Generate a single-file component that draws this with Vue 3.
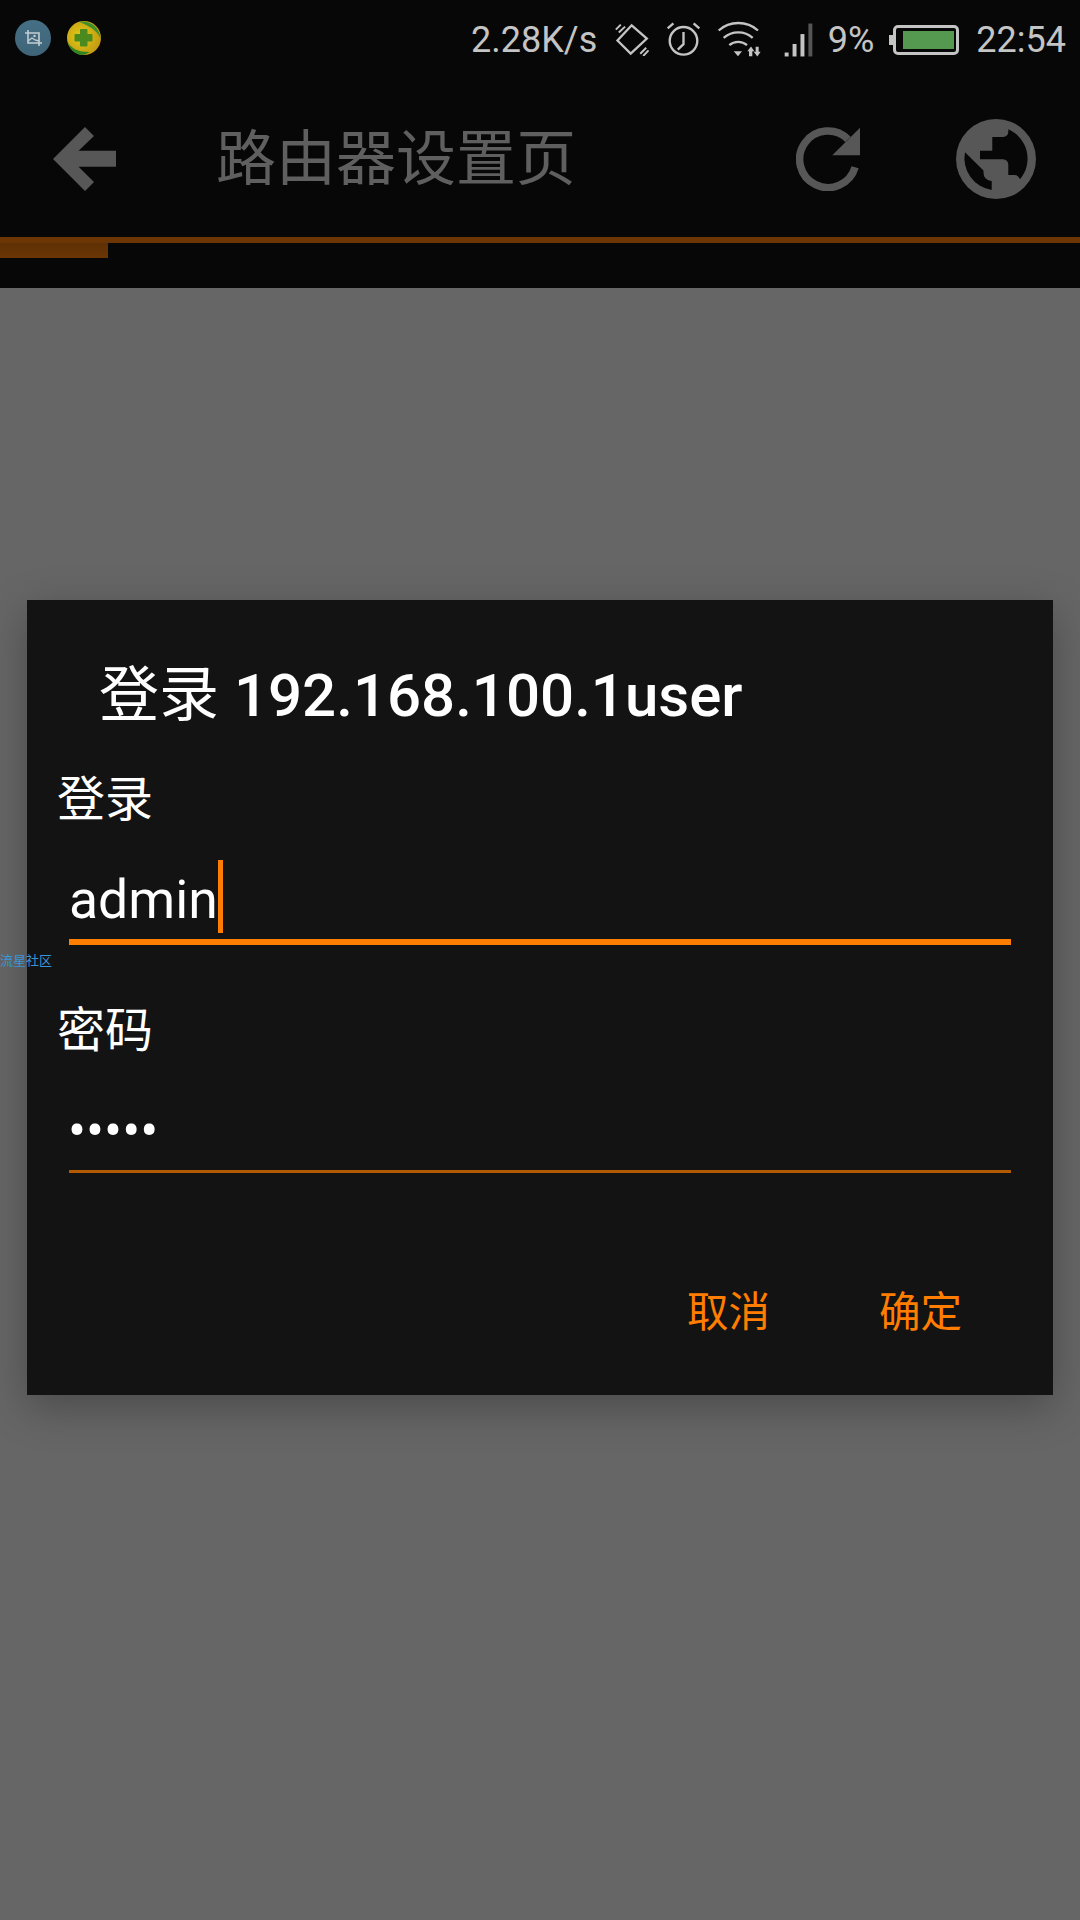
<script setup>
const password = '•••••'
</script>

<template>
  <div class="screen">
    <div class="top">
      <div class="status">
        <div class="notif">
          <svg class="app" width="36" height="36" viewBox="0 0 36 36" fill="none">
            <defs>
              <linearGradient id="blue-dot" x1="0" y1="0" x2="0" y2="1">
                <stop offset="0" stop-color="#456f85" />
                <stop offset="1" stop-color="#3f6478" />
              </linearGradient>
            </defs>
            <circle cx="18" cy="18" r="18" fill="url(#blue-dot)" />
            <path d="M13 10v13h14M10 13h14v13" stroke="#c4ced2" stroke-width="1.6" />
            <path d="M13 21l4-3 3 2 4 1" stroke="#c4ced2" stroke-width="1.3" />
            <circle cx="19.5" cy="16" r="1.2" fill="#c4ced2" />
          </svg>
          <svg class="app" width="34" height="34" viewBox="0 0 34 34">
            <defs>
              <radialGradient id="yellow-ball" cx="0.4" cy="0.45" r="0.6">
                <stop offset="0" stop-color="#e0cc18" />
                <stop offset="1" stop-color="#c49a12" />
              </radialGradient>
            </defs>
            <circle cx="17" cy="17" r="17" fill="url(#yellow-ball)" />
            <path d="M12 .8C20-1 32 3 33.8 18 30 9 22 5 12 .8z" fill="#3c8f2a" />
            <path d="M.6 21c4 7 11 10 22 10-4 3-8 3.400-11 2.400C6 31.500 2 27 .6 21z" fill="#2f8424" />
            <path d="M13.500 8.500h6.500v5h5v6.500h-5v5h-6.500v-5h-5.500v-6.500h5.500z" fill="#4b8a1e" stroke="#4b8a1e" stroke-width="1" stroke-linejoin="round" />
          </svg>
        </div>
        <div class="sys">
          <span class="speed">2.28K/s</span>
          <svg class="i-rotate" width="34" height="33" viewBox="18 25 102 100" fill="none" stroke="#c4c4c4" stroke-width="7">
            <path d="M68 32l46 40-49 46-40-40z" />
            <path d="M20 45l15-15M29 54l19-18M94 118l18-18M103 125l16-17" stroke-width="6" />
          </svg>
          <svg class="i-alarm" width="35" height="35" viewBox="170 24 104 104" fill="none" stroke="#c4c4c4" stroke-width="7">
            <circle cx="222" cy="80" r="41" />
            <path d="M222 54v36l-17 16M175 43l17-15M269 43l-17-15" />
          </svg>
          <svg class="i-wifi" width="45" height="37" viewBox="325 20 135 110" fill="none" stroke="#c4c4c4" stroke-width="7">
            <path d="M330 48c33-30 85-30 118 0M345 70c25-22 63-22 87 0M362 92c15-13 38-13 53 0" />
            <path d="M375 110h25l-12 15zM421 125v-15h-5l11-14 10 14h-6v15zM441 97h9v15h6l-10 14-11-14h6z" fill="#c4c4c4" stroke="none" />
          </svg>
          <svg class="i-signal" width="29" height="34" viewBox="520 24 88 102">
            <rect x="522" y="113" width="12" height="12" fill="#c4c4c4" />
            <rect x="546" y="87" width="12" height="38" fill="#c4c4c4" />
            <rect x="570" y="57" width="12" height="68" fill="#c4c4c4" />
            <rect x="594" y="25" width="12" height="100" fill="#555" />
          </svg>
          <span class="pct">9%</span>
          <span class="nub" />
          <span class="battery"><span class="fill" /></span>
          <span class="clock">22:54</span>
        </div>
      </div>
      <div class="toolbar">
        <svg width="63" height="64" viewBox="0 0 63 64" fill="#575757"><path d="M0 32L32 0l9 9-15.400 14.700H63v16H25.600L41 55l-9 9z" /></svg>
        <span class="title">路由器设置页</span>
        <span class="spacer" />
        <svg width="64" height="64" viewBox="0 0 64 64" fill="none">
          <path d="M59.100 40.300A28.300 28.300 0 1 1 52 12.300" stroke="#575757" stroke-width="7.500" />
          <path d="M64 .7v27.600H36.300z" fill="#575757" />
        </svg>
        <svg class="globe" width="80" height="80" viewBox="0 0 80 80">
          <circle cx="40" cy="40" r="40" fill="#575757" />
          <path d="M52.300 10.300V13a5 5 0 0 1-5 5H36.300v13.700H24v8.600H47a5.300 5.300 0 0 1 5.300 5.300V56H58a6 6 0 0 1 6 4.300A32 32 0 0 0 52.300 10.300z" fill="#070707" />
          <path d="M9 33.300l18.500 18.200v2a8 8 0 0 0 8.200 8.500V71A32 32 0 0 1 9 33.300z" fill="#070707" />
        </svg>
      </div>
      <div class="progress"><div class="bar" /></div>
    </div>

    <div class="dim">
      <div class="dialog">
        <h1 class="dlg-title"><span class="cjk">登录</span> 192.168.100.1user</h1>
        <label class="lbl">登录</label>
        <div class="field focused"><span>admin</span><i class="caret" /></div>
        <label class="lbl second">密码</label>
        <div class="field dots">{{ password }}</div>
        <div class="actions">
          <button type="button">取消</button>
          <button type="button">确定</button>
        </div>
        <span class="watermark">流星社区</span>
      </div>
    </div>
  </div>
</template>

<style>
html, body { margin: 0; background: #666; }
</style>

<style scoped>
.screen {
  width: 1080px;
  height: 1920px;
  display: flex;
  flex-direction: column;
  overflow: hidden;
  font-family: Roboto, "Noto Sans CJK SC", sans-serif;
  background: #666;
}
.top {
  height: 288px;
  background: #070707;
  flex: none;
}
.status {
  height: 79px;
  display: flex;
  justify-content: space-between;
  align-items: center;
  padding: 0 14px 0 15px;
}
.notif, .sys { display: flex; align-items: center; }
.notif { gap: 16px; margin-bottom: 4px; }
.sys { color: #c4c4c4; font-size: 36px; line-height: 44px; }
.i-rotate { margin-left: 18px; }
.i-alarm { margin-left: 17px; }
.i-wifi { margin-left: 15.5px; }
.i-signal { margin-left: 22.5px; }
.pct { margin-left: 14.5px; }
.nub { width: 4px; height: 10px; margin-left: 15px; background: #c4c4c4; }
.battery {
  width: 66px;
  height: 30px;
  border: 3px solid #c4c4c4;
  border-radius: 5px;
  padding: 3px 2px 3px 7px;
  box-sizing: border-box;
  display: flex;
}
.fill { flex: 1; background: #55984f; }
.clock { margin-left: 17px; }
.toolbar {
  height: 158px;
  box-sizing: border-box;
  display: flex;
  align-items: center;
  padding: 2px 44px 0 53px;
}
.title { color: #5f5f5f; font-size: 60px; line-height: 80px; margin: 1px 0 0 100px; }
.spacer { flex: 1; }
.globe { margin-left: 96px; }
.progress { height: 21px; border-top: 6px solid #6b3604; box-sizing: border-box; }
.bar { width: 108px; height: 15px; background: linear-gradient(#5e3005, #6b3604); }
.dim { flex: 1; padding-top: 312px; }
.dialog {
  position: relative;
  margin-left: 27px;
  width: 1026px;
  height: 795px;
  background: #131313;
  box-shadow: 0 12px 40px rgba(0, 0, 0, .28);
  box-sizing: border-box;
  padding: 56px 42px 0 30px;
  color: #fff;
}
.dlg-title { margin: 0 0 0 42px; font-size: 60px; font-weight: 500; line-height: 80px; }
.cjk { font-weight: 400; }
.lbl { display: block; font-size: 48px; line-height: 64px; margin-top: 32px; }
.lbl.second { margin-top: 54px; }
.field {
  margin: 28px 0 0 12px;
  height: 85px;
  box-sizing: border-box;
  border-bottom: 3px solid #b35900;
  font-size: 53.5px;
  line-height: 80px;
  display: flex;
}
.focused { border-bottom: 6px solid #ff7d00; }
.caret { width: 5px; height: 73px; background: #ff7d00; }
.second + .field { margin-top: 25px; }
.dots { line-height: 86px; text-indent: -1px; }
.actions {
  display: flex;
  justify-content: flex-end;
  gap: 109px;
  margin-top: 112px;
  padding-right: 49px;
}
.actions button {
  background: none;
  border: 0;
  padding: 0;
  color: #ff7d00;
  font: inherit;
  font-size: 41.5px;
  line-height: 56px;
}
.watermark {
  position: absolute;
  left: -27px;
  top: 352px;
  font-size: 13px;
  line-height: 18px;
  color: #3a94d8;
}
</style>
